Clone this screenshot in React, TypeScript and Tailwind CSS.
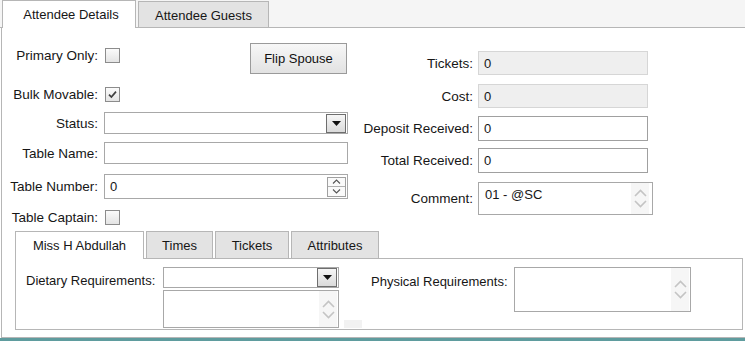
import React from "react";

function Checkbox({ checked }: { checked?: boolean }) {
  return (
    <div className="w-[15px] h-[15px] border border-[#8c8c8c] bg-linear-to-b from-[#fbfbfb] to-[#e4e4e4] flex items-center justify-center">
      {checked && (
        <svg width="11" height="11" viewBox="0 0 11 11">
          <path d="M2 5.6 L4.4 8 L9 2.6" stroke="#404040" strokeWidth="1.7" fill="none" />
        </svg>
      )}
    </div>
  );
}

function DropBtn() {
  return (
    <div className="w-[20px] h-[19px] border border-[#6e6e6e] bg-linear-to-b from-[#f6f6f6] to-[#dadada] flex items-center justify-center">
      <svg width="9" height="5" viewBox="0 0 9 5">
        <path d="M0 0 H9 L4.5 5Z" fill="#111" />
      </svg>
    </div>
  );
}

function LightSpin({ h }: { h: string }) {
  return (
    <div className={`w-[18px] ${h} bg-[#f6f6f6] flex flex-col items-center justify-center gap-[3px]`}>
      <svg width="13" height="8" viewBox="0 0 13 8">
        <path d="M1 7 L6.5 1.5 L12 7" stroke="#c4c4c4" strokeWidth="1.6" fill="none" />
      </svg>
      <svg width="13" height="8" viewBox="0 0 13 8">
        <path d="M1 1 L6.5 6.5 L12 1" stroke="#c4c4c4" strokeWidth="1.6" fill="none" />
      </svg>
    </div>
  );
}

function Label({ children, w }: { children: React.ReactNode; w: string }) {
  return <div className={`${w} text-right whitespace-nowrap text-[13.5px]`}>{children}</div>;
}

export default function App() {
  return (
    <div className="w-[745px] h-[341px] bg-white overflow-hidden text-[13px] leading-[15px] text-[#161616] font-['Liberation_Sans',Arial,sans-serif]">
      {/* top tabs */}
      <div className="h-[28px] bg-[#f5f5f5] border-b border-[#b6b6b6] flex items-end pl-[2px] gap-[2px]">
        <div className="w-[134px] h-[28px] -mb-px bg-white border border-b-0 border-[#b6b6b6] flex items-center justify-center pl-[4px]">
          Attendee Details
        </div>
        <div className="w-[131px] h-[26px] bg-[#e3e3e3] border border-b-0 border-[#b6b6b6] flex items-center justify-center pt-[1px]">
          Attendee Guests
        </div>
      </div>

      {/* main panel */}
      <div className="h-[310px] ml-[1px] border-l border-b border-[#b6b6b6] flex flex-col">
        <div className="flex">
          {/* left block */}
          <div className="w-[346px] flex flex-col">
            <div className="mt-[15px] flex items-start justify-between">
              <div className="mt-[5px] h-[15px] flex items-center">
                <Label w="w-[96px]">Primary Only:</Label>
                <div className="ml-[7px]">
                  <Checkbox />
                </div>
              </div>
              <button className="w-[97px] h-[31px] mr-[1px] border border-[#9a9a9a] bg-linear-to-b from-[#f7f7f7] to-[#e2e2e2] text-[13px] text-[#111]">
                Flip Spouse
              </button>
            </div>
            <div className="mt-[13px] h-[15px] flex items-center">
              <Label w="w-[96px]">Bulk Movable:</Label>
              <div className="ml-[7px]">
                <Checkbox checked />
              </div>
            </div>
            <div className="mt-[10px] h-[22px] flex items-center">
              <Label w="w-[96px]">Status:</Label>
              <div className="ml-[6px] w-[244px] h-[22px] border border-[#a8a8a8] bg-white flex items-center justify-end pr-[1px]">
                <DropBtn />
              </div>
            </div>
            <div className="mt-[8px] h-[22px] flex items-center">
              <Label w="w-[96px]">Table Name:</Label>
              <div className="ml-[6px] w-[244px] h-[22px] border border-[#a8a8a8] bg-white" />
            </div>
            <div className="mt-[10px] h-[25px] flex items-center">
              <Label w="w-[96px]">Table Number:</Label>
              <div className="ml-[6px] w-[244px] h-[25px] border border-[#a8a8a8] bg-white flex items-center justify-between pl-[5px] pr-[1px]">
                <span>0</span>
                <div className="w-[19px] h-[20px] border border-[#a0a0a0] flex flex-col bg-[#fafafa]">
                  <div className="flex-1 border-b border-[#b0b0b0] flex items-center justify-center">
                    <svg width="9" height="5" viewBox="0 0 9 5">
                      <path d="M1 4.5 L4.5 1 L8 4.5" stroke="#555" strokeWidth="1.1" fill="none" />
                    </svg>
                  </div>
                  <div className="flex-1 flex items-center justify-center">
                    <svg width="9" height="5" viewBox="0 0 9 5">
                      <path d="M1 0.5 L4.5 4 L8 0.5" stroke="#555" strokeWidth="1.1" fill="none" />
                    </svg>
                  </div>
                </div>
              </div>
            </div>
            <div className="mt-[11px] h-[15px] flex items-center">
              <Label w="w-[96px]">Table Captain:</Label>
              <div className="ml-[7px]">
                <Checkbox />
              </div>
            </div>
          </div>

          {/* right block */}
          <div className="flex flex-col">
            <div className="mt-[23px] h-[24px] flex items-center">
              <Label w="w-[125px]">Tickets:</Label>
              <div className="ml-[5px] w-[170px] h-[24px] border border-[#d6d6d6] bg-[#efefef] flex items-center pl-[5px]">0</div>
            </div>
            <div className="mt-[9px] h-[24px] flex items-center">
              <Label w="w-[125px]">Cost:</Label>
              <div className="ml-[5px] w-[170px] h-[24px] border border-[#d6d6d6] bg-[#efefef] flex items-center pl-[5px]">0</div>
            </div>
            <div className="mt-[8px] h-[25px] flex items-center">
              <Label w="w-[125px]">Deposit Received:</Label>
              <div className="ml-[5px] w-[170px] h-[25px] border border-[#a0a0a0] bg-white flex items-center pl-[5px]">0</div>
            </div>
            <div className="mt-[7px] h-[25px] flex items-center">
              <Label w="w-[125px]">Total Received:</Label>
              <div className="ml-[5px] w-[170px] h-[25px] border border-[#a0a0a0] bg-white flex items-center pl-[5px]">0</div>
            </div>
            <div className="mt-[9px] h-[33px] flex items-center">
              <Label w="w-[125px]">Comment:</Label>
              <div className="ml-[5px] w-[175px] h-[33px] border border-[#a8a8a8] bg-white flex items-start justify-between pl-[6px] pr-[3px]">
                <span className="mt-[4px]">01 - @SC</span>
                <LightSpin h="h-[31px]" />
              </div>
            </div>
          </div>
        </div>

        {/* sub tabs */}
        <div className="mt-[6px] ml-[13px] flex flex-col">
          <div className="h-[27px] flex items-end gap-[2px]">
            <div className="w-[129px] h-[28px] -mb-px bg-white border border-b-0 border-[#b6b6b6] flex items-center justify-center relative z-10">
              Miss H Abdullah
            </div>
            <div className="w-[67px] h-[27px] bg-[#e3e3e3] border border-b-0 border-[#b6b6b6] flex items-center justify-center">
              Times
            </div>
            <div className="w-[74px] h-[27px] bg-[#e3e3e3] border border-b-0 border-[#b6b6b6] flex items-center justify-center">
              Tickets
            </div>
            <div className="w-[88px] h-[27px] bg-[#e3e3e3] border border-b-0 border-[#b6b6b6] flex items-center justify-center">
              Attributes
            </div>
          </div>
          <div className="w-[728px] h-[72px] border border-[#b6b6b6] flex items-start pl-[10px]">
            <div className="mt-[11px] h-[20px] flex items-center">
              <div className="whitespace-nowrap w-[137px] text-[13px]">Dietary Requirements:</div>
            </div>
            <div className="mt-[8px] flex flex-col">
              <div className="w-[176px] h-[21px] border border-[#a8a8a8] bg-white flex items-center justify-end pr-[1px]">
                <DropBtn />
              </div>
              <div className="mt-[2px] w-[176px] h-[38px] border border-[#a8a8a8] bg-white flex justify-end pr-[1px]">
                <LightSpin h="h-[36px]" />
              </div>
            </div>
            <div className="self-end mb-[1px] ml-[5px] w-[18px] h-[8px] bg-[#f2f2f2]" />
            <div className="ml-[9px] mt-[15px] whitespace-nowrap w-[143px] text-[13px]">Physical Requirements:</div>
            <div className="mt-[8px] w-[177px] h-[45px] border border-[#a8a8a8] bg-white flex justify-end pr-[1px]">
              <LightSpin h="h-[43px]" />
            </div>
          </div>
        </div>
      </div>
      <div className="h-[3px] bg-[#5f9c9e]" />
    </div>
  );
}
